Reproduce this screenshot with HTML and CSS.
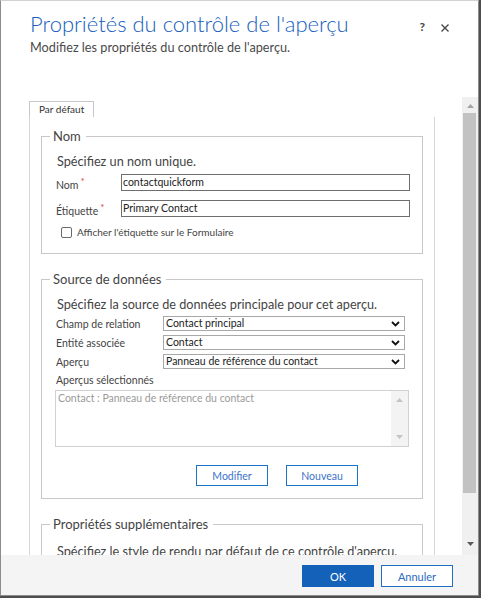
FILE: index.html
```html
<!DOCTYPE html>
<html lang="fr">
<head>
<meta charset="utf-8">
<title>Propriétés du contrôle de l'aperçu</title>
<link rel="stylesheet" href="styles.css">
</head>
<body>
<div class="dialog">
  <header class="head">
    <div class="titles">
      <h1 class="title">Propriétés du contrôle de l'aperçu</h1>
      <p class="subtitle">Modifiez les propriétés du contrôle de l'aperçu.</p>
    </div>
    <div class="head-actions">
      <span class="help">?</span>
      <svg class="close" width="8" height="8" viewBox="0 0 8 8"><path d="M0.5 0.5L7.5 7.5M7.5 0.5L0.5 7.5" stroke="#444" stroke-width="1.3" fill="none"/></svg>
    </div>
  </header>
  <div class="main">
    <div class="scroll">
      <div class="tab">Par défaut</div>
      <div class="panel">
        <fieldset class="group">
          <legend>Nom</legend>
          <p class="intro">Spécifiez un nom unique.</p>
          <div class="text-row">
            <span class="label">Nom<span class="req">*</span></span>
            <span class="input">contactquickform</span>
          </div>
          <div class="text-row">
            <span class="label">Étiquette<span class="req">*</span></span>
            <span class="input">Primary Contact</span>
          </div>
          <div class="check-row">
            <span class="checkbox"></span>
            <span class="check-label">Afficher l'étiquette sur le Formulaire</span>
          </div>
        </fieldset>
        <fieldset class="group">
          <legend>Source de données</legend>
          <p class="intro">Spécifiez la source de données principale pour cet aperçu.</p>
          <div class="sel-row">
            <span class="label sel-label">Champ de relation</span>
            <span class="select"><span>Contact principal</span><svg class="chev" width="9" height="6" viewBox="0 0 9 6"><path d="M1 1L4.5 4.5L8 1" stroke="#111" stroke-width="1.8" fill="none"/></svg></span>
          </div>
          <div class="sel-row">
            <span class="label sel-label">Entité associée</span>
            <span class="select"><span>Contact</span><svg class="chev" width="9" height="6" viewBox="0 0 9 6"><path d="M1 1L4.5 4.5L8 1" stroke="#111" stroke-width="1.8" fill="none"/></svg></span>
          </div>
          <div class="sel-row">
            <span class="label sel-label">Aperçu</span>
            <span class="select"><span>Panneau de référence du contact</span><svg class="chev" width="9" height="6" viewBox="0 0 9 6"><path d="M1 1L4.5 4.5L8 1" stroke="#111" stroke-width="1.8" fill="none"/></svg></span>
          </div>
          <div class="label list-label">Aperçus sélectionnés</div>
          <div class="listbox">
            <span class="list-text">Contact : Panneau de référence du contact</span>
            <div class="list-scroll">
              <svg width="7" height="4" viewBox="0 0 7 4"><path d="M0 4L3.5 0L7 4Z" fill="#c4c4c4"/></svg>
              <svg width="7" height="4" viewBox="0 0 7 4"><path d="M0 0L3.5 4L7 0Z" fill="#c4c4c4"/></svg>
            </div>
          </div>
          <div class="btn-row">
            <button class="btn">Modifier</button>
            <button class="btn">Nouveau</button>
          </div>
        </fieldset>
        <fieldset class="group last">
          <legend>Propriétés supplémentaires</legend>
          <p class="intro">Spécifiez le style de rendu par défaut de ce contrôle d'aperçu.</p>
        </fieldset>
      </div>
    </div>
    <div class="scrollbar">
      <div class="sb-arrow"><svg width="7" height="4" viewBox="0 0 7 4"><path d="M0 4L3.5 0L7 4Z" fill="#a3a3a3"/></svg></div>
      <div class="thumb"></div>
      <div class="sb-space"></div>
      <div class="sb-arrow down"><svg width="7" height="4" viewBox="0 0 7 4"><path d="M0 0L3.5 4L7 0Z" fill="#5a5a5a"/></svg></div>
    </div>
  </div>
  <footer class="foot">
    <button class="primary">OK</button>
    <button class="secondary">Annuler</button>
  </footer>
</div>
</body>
</html>
```

FILE: styles.css
```css
* { box-sizing: border-box; }
html, body { margin: 0; height: 100%; }
body {
  background: #4e4e4e;
  font-family: Lato, "Liberation Sans", sans-serif;
  color: #444;
}
.dialog {
  width: 479px;
  height: 596px;
  background: #fff;
  border: 1px solid #8c8c8c;
  border-top-color: #d2d2d2;
  display: flex;
  flex-direction: column;
}
.head {
  height: 96px;
  flex: none;
  display: flex;
  justify-content: space-between;
  padding: 9px 0 0 29px;
}
.title {
  margin: 0;
  font-size: 22px;
  font-weight: 300;
  line-height: 28px;
  color: #1560bd;
}
.subtitle {
  margin: 0;
  font-size: 12.7px;
  line-height: 18px;
  color: #4a4a4a;
}
.head-actions {
  display: flex;
  align-items: flex-start;
  gap: 16px;
  padding-right: 29px;
  margin-top: -9px;
}
.help {
  margin-top: 20px;
  font-size: 12px;
  line-height: 12px;
  font-weight: 700;
  color: #444;
}
.close { margin-top: 23px; }

.main {
  flex: 1;
  display: flex;
  min-height: 0;
}
.scroll {
  flex: 1;
  overflow: hidden;
  padding: 4px 0 0 28px;
}
.tab {
  width: max-content;
  height: 16px;
  border: 1px solid #c8c8c8;
  border-bottom: none;
  padding: 0 9px;
  font-size: 10px;
  line-height: 15px;
  color: #333;
}
.panel {
  width: 406px;
  height: 600px;
  border-left: 1px solid #d6d6d6;
  border-right: 1px solid #d6d6d6;
  padding: 10px 11px 0 11px;
}
.group {
  margin: 0;
  min-width: 0;
  border: 1px solid #c8c8c8;
  padding: 7px 12px 15px 14px;
}
.group + .group { margin-top: 16px; }
.group.last { padding-top: 9px; padding-bottom: 60px; }
.group legend {
  padding: 0 5px 0 3px;
  margin-left: -6px;
  font-size: 13px;
  line-height: 18px;
  color: #444;
}
.intro {
  margin: 0 0 0 1px;
  font-size: 12.7px;
  line-height: 18px;
  color: #444;
  white-space: nowrap;
}
.label {
  font-size: 10.5px;
  line-height: 12px;
  color: #444;
  white-space: nowrap;
}
.req {
  color: #e0474c;
  font-size: 10px;
  position: relative;
  top: -4px;
  margin-left: 2px;
}
.text-row {
  display: flex;
  align-items: flex-end;
  height: 17px;
  margin-top: 4px;
}
.text-row + .text-row { margin-top: 9px; }
.text-row .label { width: 65px; flex: none; }
.input {
  width: 289px;
  height: 17px;
  border: 1px solid #6e6e6e;
  padding: 0 1px;
  font-size: 10.5px;
  line-height: 15px;
  color: #222;
}
.check-row {
  display: flex;
  align-items: center;
  height: 12px;
  margin-top: 9px;
}
.checkbox {
  width: 11px;
  height: 11px;
  margin-left: 5px;
  border: 1px solid #6a6a6a;
  border-radius: 2px;
  background: #fff;
}
.check-label {
  margin-left: 5px;
  font-size: 10px;
  line-height: 12px;
  color: #444;
}
.sel-row {
  display: flex;
  align-items: center;
  height: 15px;
  margin-top: 4px;
}
.intro + .sel-row { margin-top: 3px; }
.sel-label { width: 107px; flex: none; }
.select {
  width: 242px;
  height: 15px;
  border: 1px solid #a8a8a8;
  padding: 0 4px 0 2px;
  display: flex;
  justify-content: space-between;
  align-items: center;
  font-size: 10.5px;
  line-height: 13px;
  color: #222;
}
.list-label {
  margin-top: 4px;
  line-height: 14px;
}
.listbox {
  margin: 3px 0 0 -1px;
  width: 354px;
  height: 57px;
  border: 1px solid #d0d0d0;
  display: flex;
  justify-content: space-between;
}
.list-text {
  padding-left: 2px;
  font-size: 10.5px;
  line-height: 14px;
  color: #9a9a9a;
}
.list-scroll {
  width: 17px;
  background: #f3f3f3;
  display: flex;
  flex-direction: column;
  justify-content: space-between;
  align-items: center;
  padding: 7px 0 7px;
}
.btn-row {
  display: flex;
  gap: 18px;
  margin-top: 18px;
  padding-left: 140px;
}
.btn {
  width: 72px;
  height: 21px;
  padding: 0;
  background: #fff;
  border: 1px solid #1b74c8;
  color: #3a72c8;
  font-family: inherit;
  font-size: 10.5px;
}
.group:nth-of-type(2) { padding-bottom: 12px; }

.scrollbar {
  width: 16px;
  flex: none;
  background: #f0f0f0;
  display: flex;
  flex-direction: column;
}
.sb-arrow {
  height: 16px;
  display: flex;
  align-items: center;
  justify-content: center;
  padding-top: 1px;
}
.sb-arrow.down { padding-top: 0; padding-bottom: 7px; }
.thumb {
  height: 380px;
  margin: 0 2px 0 1px;
  background: #c2c2c2;
}
.sb-space { flex: 1; }

.foot {
  height: 40px;
  flex: none;
  background: #f4f4f4;
  display: flex;
  justify-content: flex-end;
  gap: 7px;
  padding: 10px 25px 0 0;
}
.foot button {
  width: 72px;
  height: 22px;
  padding: 0;
  font-family: inherit;
  font-size: 11px;
}
.primary {
  background: #1361b8;
  border: 1px solid #1361b8;
  color: #fff;
}
.secondary {
  background: #fff;
  border: 1px solid #1f6fc6;
  color: #2b6bc3;
}
```
